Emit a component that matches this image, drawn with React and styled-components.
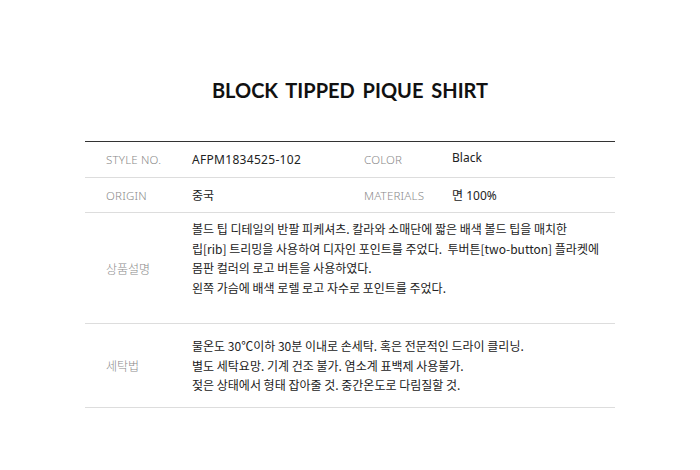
import React from "react";
import styled, { createGlobalStyle } from "styled-components";

const Global = createGlobalStyle`
  html, body { margin: 0; padding: 0; background: #fff; }
  body { font-family: "Noto Sans CJK KR", "Noto Sans", sans-serif; }
`;

const Page = styled.div`
  width: 700px;
  padding-top: 78px;
`;

const Title = styled.h1`
  margin: 0 0 38px;
  text-align: center;
  font-family: "Lato", "Liberation Sans", sans-serif;
  font-weight: 700;
  font-size: 20px;
  line-height: 25px;
  letter-spacing: 0;
  word-spacing: 3px;
  color: #111;
`;

const Table = styled.div`
  width: 530px;
  margin: 0 auto;
  border-top: 1px solid #333;
`;

const Row = styled.div`
  display: grid;
  grid-template-columns: 107px 151px 109px 1fr;
  align-items: center;
  height: ${(p) => p.$h}px;
  border-bottom: 1px solid #ddd;
`;

const Label = styled.div`
  padding-left: 21px;
  font-family: ${(p) => (p.$kr ? '"Noto Sans CJK KR", sans-serif' : '"Noto Sans", "Liberation Sans", sans-serif')};
  font-weight: 300;
  font-size: ${(p) => (p.$kr ? 12 : 11.5)}px;
  color: #8a8a8a;
  letter-spacing: ${(p) => (p.$kr ? 0 : 0.2)}px;
`;

const Value = styled.div`
  font-family: "Noto Sans", "Noto Sans CJK KR", sans-serif;
  font-size: 12px;
  color: #222;
  letter-spacing: ${(p) => p.$ls || 0}px;
  margin-top: ${(p) => p.$up || 0}px;
`;

const Para = styled.div`
  grid-column: 2 / 5;
  font-family: "Noto Sans CJK KR", sans-serif;
  font-size: 12px;
  line-height: 19.5px;
  letter-spacing: 0;
  color: #222;
  white-space: pre;
`;

export default function App() {
  return (
    <>
      <Global />
      <Page>
        <Title>BLOCK TIPPED PIQUE SHIRT</Title>
        <Table>
          <Row $h={35}>
            <Label>STYLE NO.</Label>
            <Value $ls={0.3}>AFPM1834525-102</Value>
            <Label>COLOR</Label>
            <Value $up={-4}>Black</Value>
          </Row>
          <Row $h={34}>
            <Label>ORIGIN</Label>
            <Value>중국</Value>
            <Label>MATERIALS</Label>
            <Value>면 100%</Value>
          </Row>
          <Row $h={110}>
            <Label $kr>상품설명</Label>
            <Para>
              {"볼드 팁 디테일의 반팔 피케셔츠. 칼라와 소매단에 짧은 배색 볼드 팁을 매치한\n립[rib] 트리밍을 사용하여 디자인 포인트를 주었다.  투버튼[two-button] 플라켓에\n몸판 컬러의 로고 버튼을 사용하였다.\n왼쪽 가슴에 배색 로렐 로고 자수로 포인트를 주었다.\n "}
            </Para>
          </Row>
          <Row $h={83}>
            <Label $kr>세탁법</Label>
            <Para>
              {"물온도 30℃이하 30분 이내로 손세탁. 혹은 전문적인 드라이 클리닝.\n별도 세탁요망. 기계 건조 불가. 염소계 표백제 사용불가.\n젖은 상태에서 형태 잡아줄 것. 중간온도로 다림질할 것."}
            </Para>
          </Row>
        </Table>
      </Page>
    </>
  );
}
